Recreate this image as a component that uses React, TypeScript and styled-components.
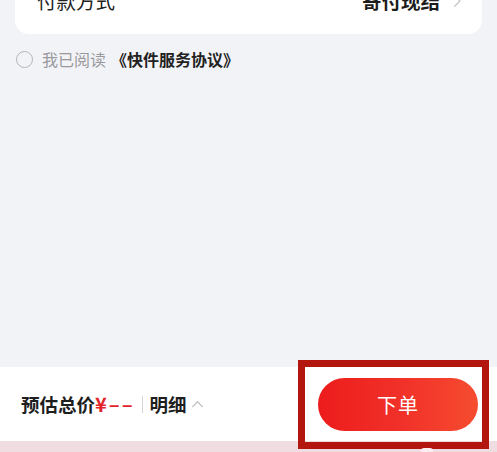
import React from 'react'
import styled, {createGlobalStyle} from 'styled-components'

const GlobalStyle = createGlobalStyle`
    html, body {
        margin: 0;
        padding: 0;
        background: #f2f3f7;
        font-family: "Noto Sans CJK SC", "Noto Sans", sans-serif;
        overflow: hidden;
    }
`

const StyledPage = styled.div`
    position: relative;
    width: 497px;
    height: 452px;
    display: flex;
    flex-direction: column;
    background: #f2f3f7;
    overflow: hidden;
`

const StyledCard = styled.div`
    margin: -32px 15px 0 15px;
    height: 66px;
    background: #ffffff;
    border-radius: 14px;
    display: flex;
    align-items: center;
    justify-content: space-between;
    padding: 0 18px 0 22px;
    box-sizing: border-box;
`

const StyledLabel = styled.span`
    font-size: 19.5px;
    color: #222;
    line-height: 1;
`

const StyledValue = styled.span`
    display: flex;
    align-items: center;
    gap: 10px;
    font-size: 19.5px;
    font-weight: 700;
    color: #1c1c1c;
    line-height: 1;
`

const StyledAgree = styled.div`
    display: flex;
    align-items: center;
    padding: 15px 0 0 16px;
    font-size: 16px;
    line-height: 20px;
`

const StyledRadio = styled.span`
    width: 15px;
    height: 15px;
    border: 1.3px solid #b4b4b8;
    border-radius: 50%;
    margin-right: 9px;
`

const StyledMuted = styled.span`
    color: #9a9a9e;
    margin-right: 5px;
`

const StyledBold = styled.span`
    color: #222;
    font-weight: 700;
`

const StyledSpacer = styled.div`
    flex: 1;
`

const StyledBar = styled.div`
    height: 74px;
    background: #ffffff;
    display: flex;
    align-items: center;
    justify-content: space-between;
    padding: 0 19px 0 21px;
    box-sizing: border-box;
`

const StyledPrice = styled.div`
    display: flex;
    align-items: center;
    font-size: 18.5px;
    font-weight: 700;
    color: #1e1e1e;
    line-height: 1;
`

const StyledRed = styled.span`
    color: #e3232b;
    font-size: 20px;
    letter-spacing: 2px;
`

const StyledDivider = styled.span`
    width: 1px;
    height: 17px;
    background: #d6d6d6;
    margin: 0 7px 0 7px;
`

const StyledButton = styled.button`
    width: 160px;
    height: 53px;
    border: none;
    border-radius: 27px;
    background: linear-gradient(90deg, #ed1c1c 0%, #f1322a 55%, #f64c2f 100%);
    color: #ffffff;
    font-family: inherit;
    font-size: 20px;
    letter-spacing: 1px;
`

const StyledStrip = styled.div`
    height: 11px;
    background: #f0dde1;
`

const StyledMark = styled.div`
    position: absolute;
    left: 298px;
    top: 360px;
    width: 191px;
    height: 89px;
    border: 7px solid #b3160f;
    box-sizing: border-box;
`

const StyledDots = styled.div`
    position: absolute;
    left: 421px;
    top: 448px;
    width: 12px;
    height: 6px;
    border-radius: 3px;
    background: #fbeef0;
`

const StyledChevronWrap = styled.span`
    display: flex;
    margin-left: 4px;
`

const Chevron = ({dir, size, color}: {dir: 'right' | 'up', size: number, color: string}) => (
    <svg width={size} height={size} viewBox="0 0 12 12" fill="none">
        {dir === 'right'
            ? <path d="M4 1.5 L8.5 6 L4 10.5" stroke={color} strokeWidth="1.2" strokeLinecap="round" strokeLinejoin="round" />
            : <path d="M1.5 8 L6 3.5 L10.5 8" stroke={color} strokeWidth="1.2" strokeLinecap="round" strokeLinejoin="round" />}
    </svg>
)

export default function App() {
    return (
        <StyledPage>
            <GlobalStyle />
            <StyledCard>
                <StyledLabel>付款方式</StyledLabel>
                <StyledValue>
                    寄付现结
                    <Chevron dir="right" size={14} color="#c8c8cc" />
                </StyledValue>
            </StyledCard>
            <StyledAgree>
                <StyledRadio />
                <StyledMuted>我已阅读</StyledMuted>
                <StyledBold>《快件服务协议》</StyledBold>
            </StyledAgree>
            <StyledSpacer />
            <StyledBar>
                <StyledPrice>
                    预估总价<StyledRed>¥––</StyledRed>
                    <StyledDivider />
                    明细
                    <StyledChevronWrap>
                        <Chevron dir="up" size={13} color="#c4c4c8" />
                    </StyledChevronWrap>
                </StyledPrice>
                <StyledButton>下单</StyledButton>
            </StyledBar>
            <StyledStrip />
            <StyledMark />
            <StyledDots />
        </StyledPage>
    )
}
